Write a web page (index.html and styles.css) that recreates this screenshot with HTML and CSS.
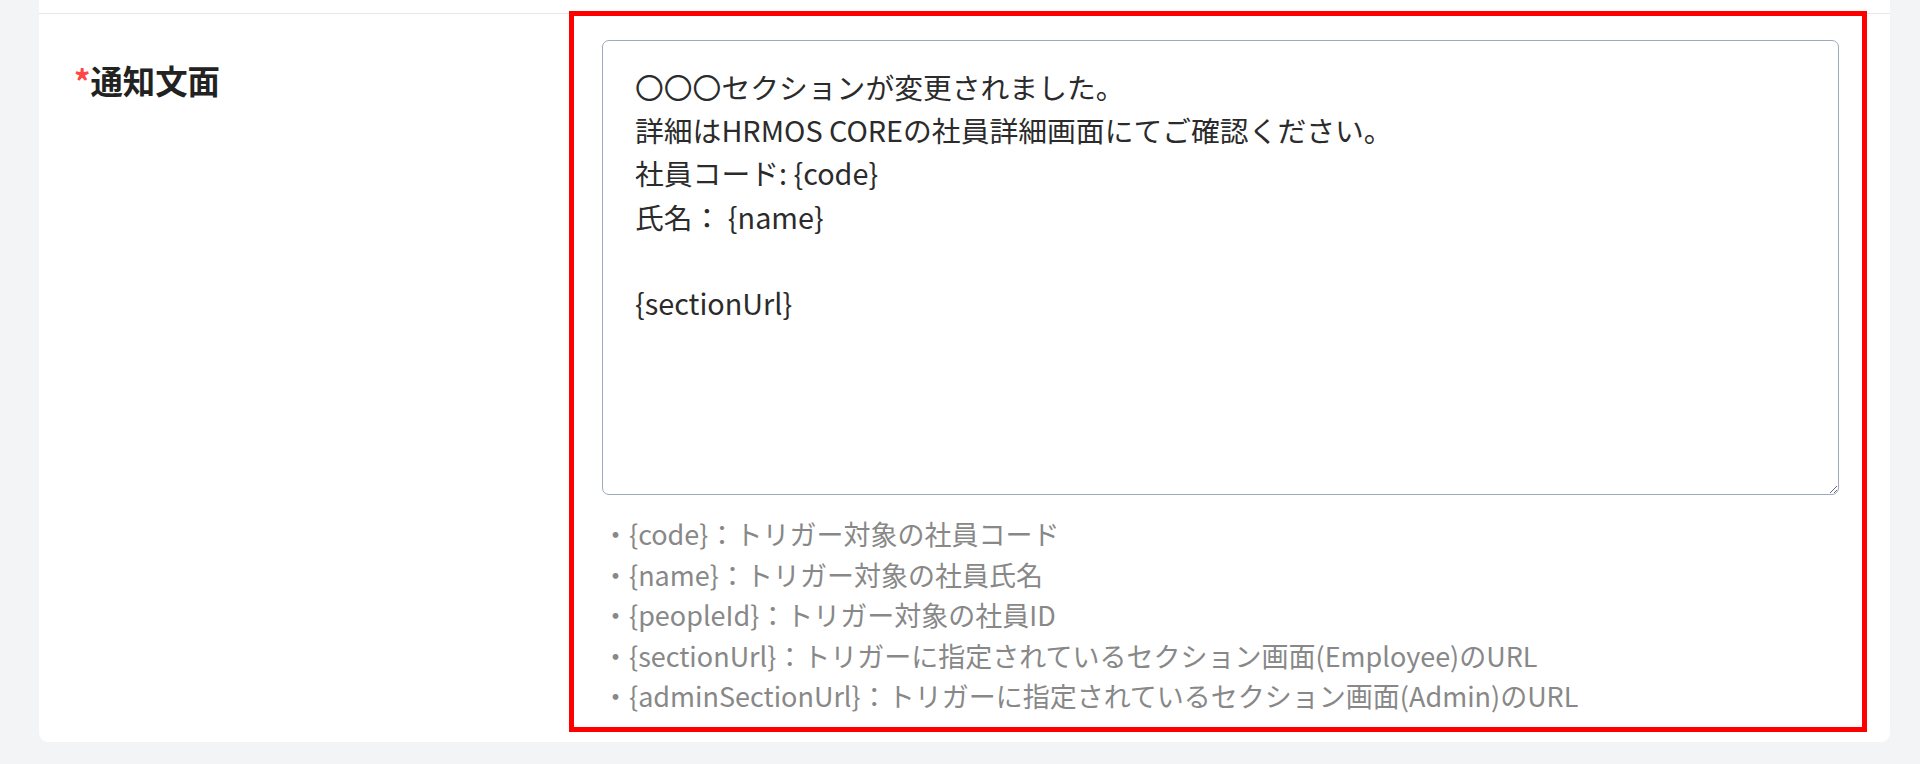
FILE: index.html
```html
<!DOCTYPE html>
<html lang="ja">
<head>
<meta charset="utf-8">
<title>通知文面</title>
<link rel="stylesheet" href="styles.css">
</head>
<body>
<main class="page">
  <section class="card">
    <div class="card-top"></div>
    <div class="form-row">
      <div class="form-label"><span class="req">*</span>通知文面</div>
      <div class="form-field">
        <textarea class="message" spellcheck="false">〇〇〇セクションが変更されました。
詳細はHRMOS COREの社員詳細画面にてご確認ください。
社員コード: {code}
氏名： {name}

{sectionUrl}</textarea>
        <ul class="vars">
          <li>・{code}：トリガー対象の社員コード</li>
          <li>・{name}：トリガー対象の社員氏名</li>
          <li>・{peopleId}：トリガー対象の社員ID</li>
          <li>・{sectionUrl}：トリガーに指定されているセクション画面(Employee)のURL</li>
          <li>・{adminSectionUrl}：トリガーに指定されているセクション画面(Admin)のURL</li>
        </ul>
        <div class="highlight" aria-hidden="true"></div>
      </div>
    </div>
  </section>
</main>
</body>
</html>
```
FILE: styles.css
```css
html, body {
  margin: 0;
  height: 100%;
  background: #f3f4f6;
}
body {
  font-family: "Noto Sans CJK JP", "Noto Sans", sans-serif;
  overflow: hidden;
}
.page {
  padding: 0 30px 0 39px;
}
.card {
  background: #ffffff;
  border-radius: 0 0 9px 9px;
}
.card-top {
  height: 13px;
  border-bottom: 1px solid #e5e7eb;
}
.form-row {
  display: grid;
  grid-template-columns: 528px 1fr;
  padding: 26px 51px 25px 35px;
}
.form-label {
  font-size: 32.4px;
  font-weight: 700;
  line-height: 1.5;
  color: #222222;
  padding-top: 16px;
}
.req {
  color: #ff4545;
}
.form-field {
  position: relative;
}
.message {
  display: block;
  box-sizing: border-box;
  width: 100%;
  height: 455px;
  margin: 0;
  padding: 24px 32px;
  border: 1px solid #9eaabb;
  border-radius: 7px;
  background: #fff;
  color: #2b2b2b;
  font-family: "Noto Sans CJK JP", "Noto Sans", sans-serif;
  font-size: 28.8px;
  line-height: 1.5;
  outline: none;
}
.vars {
  list-style: none;
  margin: 19px 0 0;
  padding: 0;
  font-size: 27px;
  line-height: 1.5;
  color: #888888;
}
.highlight {
  position: absolute;
  top: -29px;
  left: -33px;
  right: -28px;
  bottom: -15.5px;
  border: 5px solid #ff0000;
  pointer-events: none;
}
```
